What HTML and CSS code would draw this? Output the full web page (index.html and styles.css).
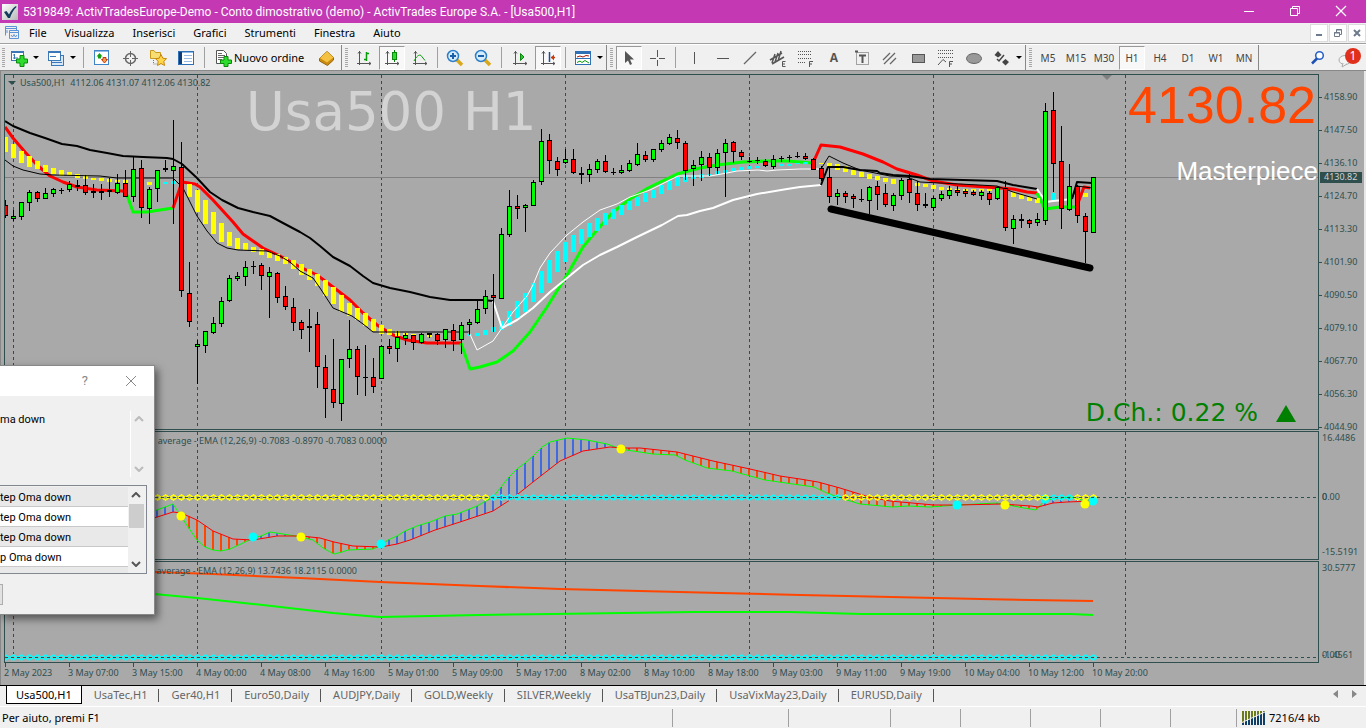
FILE: index.html
```html
<!DOCTYPE html>
<html lang="it">
<head>
<meta charset="utf-8">
<title>5319849: ActivTradesEurope-Demo - [Usa500,H1]</title>
<link rel="stylesheet" href="styles.css">
</head>
<body>
<header class="titlebar">
  <svg class="app-icon" width="16" height="16" viewBox="0 0 16 16"><defs><linearGradient id="ag" x1="0" y1="0" x2="1" y2="1"><stop offset="0" stop-color="#fff"/><stop offset="1" stop-color="#b4b8b6"/></linearGradient></defs><rect width="16" height="16" fill="url(#ag)"/><path d="M2 8 4.500 7 7 10.500C9 6.500 11 4 14 2L14.500 3C11.500 6 9.500 9.500 8 14H6Z" fill="#123a5c"/></svg>
  <h1 class="title-text">5319849: ActivTradesEurope-Demo - Conto dimostrativo (demo) - ActivTrades Europe S.A. - [Usa500,H1]</h1>
  <div class="win-buttons">
    <button class="win-btn" aria-label="Riduci a icona"><svg width="12" height="12"><path d="M1 6.500H11" stroke="#fff"/></svg></button>
    <button class="win-btn" aria-label="Ripristina"><svg width="12" height="12" fill="none" stroke="#fff"><path d="M1.500 3.500H8.500V10.500H1.500ZM3.500 3V1.500H10.500V8.500H9"/></svg></button>
    <button class="win-btn" aria-label="Chiudi"><svg width="12" height="12"><path d="M1 1 11 11M11 1 1 11" stroke="#fff" stroke-width="1.200"/></svg></button>
  </div>
</header>

<nav class="menubar">
  <svg class="menu-icon" width="16" height="16" viewBox="0 0 16 16" fill="none" stroke="#5b93d8"><path d="M1.500 10.500V1.500H12.500V5M1 3.500H12M5.500 13.500V5.500H14.500V13.500ZM5 7.500H14"/><path d="M3 8V5M7 10 8.500 12 10 9.500 11.500 12 13 10"/></svg>
  <button class="menu-item">File</button><button class="menu-item">Visualizza</button><button class="menu-item">Inserisci</button><button class="menu-item">Grafici</button><button class="menu-item">Strumenti</button><button class="menu-item">Finestra</button><button class="menu-item">Aiuto</button>
  <div class="mdi-buttons">
    <button class="mdi-btn" aria-label="Riduci grafico"><svg width="10" height="10"><path d="M2 7H8" stroke="#6d7b8c" stroke-width="2"/></svg></button>
    <button class="mdi-btn" aria-label="Ripristina grafico"><svg width="10" height="10" fill="none" stroke="#6d7b8c"><path d="M1.500 4.500H6.500V8.500H1.500ZM1 5H7M3.500 4V1.500H8.500V6.500H7M3 2H9"/></svg></button>
    <button class="mdi-btn" aria-label="Chiudi grafico"><svg width="10" height="10"><path d="M2 2 8 8M8 2 2 8" stroke="#6d7b8c" stroke-width="2"/></svg></button>
  </div>
</nav>

<div class="toolbar" role="toolbar">
  <span class="grip grip-first"></span>
  <button class="tool" aria-label="Nuovo grafico"><svg width="18" height="18"><rect x="1.500" y="2.500" width="12" height="9" fill="#fff" stroke="#3b78b5"/><path d="M1 3H14" stroke="#3b78b5" stroke-width="2"/><path d="M4.500 5V10M3 6H5M3 9H8" stroke="#3b78b5"/><path d="M10 6.500H14V10H17.500V14H14V17.500H10V14H6.500V10H10Z" fill="#2edc2e" stroke="#0a8a0a"/></svg></button><span class="caret"></span>
  <button class="tool" aria-label="Profili"><svg width="18" height="18" stroke="#3b78b5"><rect x="4.500" y="6.500" width="12" height="10" fill="#d6e8fa"/><rect x="1.500" y="2.500" width="12" height="9" fill="#fff"/><path d="M1 3H14" stroke-width="2"/><path d="M3 7.500H9M5 13.500H15"/></svg></button><span class="caret"></span>
  <span class="sep"></span>
  <button class="tool" aria-label="Market Watch"><svg width="18" height="18"><rect x="1.500" y="1.500" width="14" height="14" fill="#fff" stroke="#3f86c8"/><path d="M2 2.500H15" stroke="#8fbbe6"/><path d="M6.500 4 9.500 7.500H8V9.500H5V7.500H3.500Z" fill="#12a012"/><path d="M11.500 14 14.500 10.500H13V8.500H10V10.500H8.500Z" fill="#f0a050" stroke="#c8380a"/></svg></button>
  <button class="tool" aria-label="Finestra dati"><svg width="18" height="18" fill="none" stroke="#666"><circle cx="9.500" cy="9.500" r="5" stroke-width="1.500"/><path d="M9.500 2V8M9.500 11V17M2 9.500H8M11 9.500H17" /></svg></button>
  <button class="tool" aria-label="Navigatore"><svg width="18" height="18"><path d="M1.500 9.500V1.500H5L6.500 3.500H11.500V9.500Z" fill="#f8dc74" stroke="#c89a1c"/><path d="M4.500 11V15H8" stroke="#777" stroke-dasharray="1 1" fill="none"/><path d="M12 5.500 13.800 9.200 17.500 9.700 14.800 12.300 15.500 16.500 12 14.500 8.500 16.500 9.200 12.300 6.500 9.700 10.200 9.200Z" fill="#ffd54a" stroke="#c8860a"/></svg></button>
  <button class="tool" aria-label="Terminale"><svg width="18" height="18"><rect x="1.500" y="2.500" width="15" height="13" fill="#fff" stroke="#2f6fb5"/><path d="M2 3.500H16" stroke="#8fbbe6"/><path d="M3.500 3V15" stroke="#123c74" stroke-width="3"/><path d="M7 6.500H15M7 9.500H15M7 12.500H15" stroke="#9bbce0"/></svg></button>
  <span class="sep"></span>
  <button class="tool tool-order"><svg width="18" height="18"><path d="M2.500 1.500H9.500L12.500 4.500V14.500H2.500Z" fill="#fff" stroke="#555"/><path d="M4 4.500H8M4 6.500H11M4 8.500H11M4 10.500H8" stroke="#666"/><path d="M10 7.500H14V11H17.500V14.500H14V17.500H10V14.500H6.500V11H10Z" fill="#2edc2e" stroke="#0a8a0a"/></svg>Nuovo ordine</button>
  <button class="tool" aria-label="MetaEditor"><svg width="18" height="18"><path d="M1.500 9.500 9 2.500 15.500 8.500V11L9.500 16.500 1.500 12Z" fill="#c98a10" stroke="#9a6708"/><path d="M2 9 9 2.500 15.500 8.500 9 13.500Z" fill="#f4c141"/></svg></button>
  <span class="groupsep"><span class="grip"></span></span>
  <button class="tool" aria-label="Grafico a barre"><svg width="18" height="18" fill="none"><path d="M4.500 2V16M2 14.500H16M3 4.500 4.500 2.500 6 4.500M14 13 16 14.500 14 16" stroke="#555"/><path d="M11.500 3V12M9 10.500H11M12 4.500H14" stroke="#0a9a0a" stroke-width="1.500"/></svg></button>
  <button class="tool pressed" aria-label="Candele"><svg width="18" height="18" fill="none"><path d="M4.500 2V16M2 14.500H16M3 4.500 4.500 2.500 6 4.500M14 13 16 14.500 14 16" stroke="#555"/><path d="M11.500 1V13" stroke="#0a7a0a"/><rect x="9.500" y="3.500" width="4" height="7" fill="#2edc2e" stroke="#0a8a0a"/></svg></button>
  <button class="tool" aria-label="Grafico a linee"><svg width="18" height="18" fill="none"><path d="M4.500 2V16M2 14.500H16M3 4.500 4.500 2.500 6 4.500M14 13 16 14.500 14 16" stroke="#555"/><path d="M3 12C5 8 8 5 10 6.500L14 11.500" stroke="#0a9a0a"/></svg></button>
  <span class="sep narrow"></span>
  <button class="tool" aria-label="Zoom avanti"><svg width="18" height="18"><path d="M11 11 16 16" stroke="#d8a81c" stroke-width="3.500"/><circle cx="7" cy="7" r="5.500" fill="#d4ecfc" stroke="#2f7fc8" stroke-width="1.500"/><path d="M4 7H10M7 4V10" stroke="#1a5fa8" stroke-width="2"/></svg></button>
  <button class="tool" aria-label="Zoom indietro"><svg width="18" height="18"><path d="M11 11 16 16" stroke="#d8a81c" stroke-width="3.500"/><circle cx="7" cy="7" r="5.500" fill="#d4ecfc" stroke="#2f7fc8" stroke-width="1.500"/><path d="M4 7H10" stroke="#1a5fa8" stroke-width="2"/></svg></button>
  <span class="sep"></span>
  <button class="tool" aria-label="Scorrimento automatico"><svg width="18" height="18" fill="none"><path d="M4.500 2V16M2 14.500H16M3 4.500 4.500 2.500 6 4.500M14 13 16 14.500 14 16" stroke="#555"/><path d="M9.500 4.500 13 8 9.500 11.500Z" fill="#2ec62e" stroke="#0a8a0a"/></svg></button>
  <button class="tool pressed" aria-label="Spostamento grafico"><svg width="18" height="18" fill="none"><path d="M4.500 2V16M2 14.500H16M3 4.500 4.500 2.500 6 4.500M14 13 16 14.500 14 16" stroke="#555"/><path d="M10.500 3V13" stroke="#1a4f98" stroke-width="1.500"/><path d="M12 8.500H16" stroke="#c8380a" stroke-width="1.500"/><path d="M15 5.500 12 8.500 15 11.500Z" fill="#c8380a"/></svg></button>
  <span class="sep narrow"></span>
  <button class="tool" aria-label="Modelli"><svg width="18" height="18" fill="none"><rect x="1.500" y="2.500" width="15" height="13" fill="#fff" stroke="#2f6fb5"/><path d="M1 3.500H17" stroke="#2f6fb5" stroke-width="3"/><path d="M2 9.500H16" stroke="#2f6fb5"/><path d="M3 8 6 7 9 8 12 6.500 15 7" stroke="#a01c0a"/><path d="M3 13.500 6 12 8 13.500 11 11.500 15 14" stroke="#0a9a0a"/></svg></button><span class="caret"></span>
  <span class="groupsep"><span class="grip"></span></span>
  <button class="tool pressed" aria-label="Cursore"><svg width="18" height="18"><path d="M5 2V14L8 11.500 10 16 12 15 10 10.500H14Z" fill="#555"/></svg></button>
  <button class="tool" aria-label="Mirino"><svg width="18" height="18"><path d="M9.500 1V8M9.500 11V17M2 9.500H8M11 9.500H17" stroke="#555"/></svg></button>
  <span class="sep"></span>
  <button class="tool" aria-label="Linea verticale"><svg width="18" height="18"><path d="M9.500 3V15" stroke="#555"/></svg></button>
  <button class="tool" aria-label="Linea orizzontale"><svg width="18" height="18"><path d="M4 9.500H16" stroke="#555"/></svg></button>
  <button class="tool" aria-label="Trendline"><svg width="18" height="18"><path d="M3 15 15 3" stroke="#666" stroke-width="1.200"/></svg></button>
  <button class="tool" aria-label="Canale equidistante"><svg width="18" height="18" stroke="#555"><path d="M1 11 13 4M3 15 15 8M3 14 6 5M6 13 9 4M9 12 12 2" stroke-width="1.500"/><path d="M16.500 12.500H13.500V17.500H16.500M13 15H16" fill="none"/></svg></button>
  <button class="tool" aria-label="Fibonacci"><svg width="18" height="18" stroke="#555" fill="none"><path d="M1 2.500H15M1 5.500H15M1 9.500H15M1 13.500H9" stroke-dasharray="1 1"/><path d="M12.500 18V12.500H16M12 15H15"/></svg></button>
  <button class="tool letter" aria-label="Testo">A</button>
  <button class="tool" aria-label="Etichetta"><svg width="18" height="18" stroke="#555"><rect x="3.500" y="3.500" width="12" height="12" fill="none" stroke-dasharray="1 1"/><path d="M2 2.500H5M6 6.500H13M9.500 6V14" stroke-width="2"/></svg></button>
  <button class="tool" aria-label="Andrews"><svg width="18" height="18" stroke="#666" stroke-width="1.300"><path d="M2 11 9 4M3 15 14 4M9 15 15 9"/></svg></button>
  <button class="tool" aria-label="Rettangolo"><svg width="18" height="18"><rect x="3.500" y="5.500" width="12" height="8" fill="#999" stroke="#555"/></svg></button>
  <button class="tool" aria-label="Espansione"><svg width="18" height="18" stroke="#555" fill="none"><path d="M1 1.500H16M1 4.500H16M1 8.500H16" stroke-dasharray="1 1"/><path d="M1 16 6 10.500 9 13M12.500 18V12.500H16M12 15H15"/></svg></button>
  <button class="tool" aria-label="Ellisse"><svg width="18" height="18"><ellipse cx="9" cy="9.500" rx="7.500" ry="5" fill="#999" stroke="#666"/></svg></button>
  <button class="tool" aria-label="Frecce"><svg width="18" height="18"><path d="M5 2 8.500 6 5 8.500 1.500 6ZM12.500 10 16 13 12.500 16.500 9 13Z" fill="#444"/><path d="M4 10 6 12 11 6" stroke="#444" stroke-width="1.500" fill="none"/></svg></button><span class="caret"></span>
  <span class="groupsep"><span class="grip"></span></span>
  <button class="tool tf">M5</button><button class="tool tf">M15</button><button class="tool tf">M30</button><button class="tool tf pressed">H1</button><button class="tool tf">H4</button><button class="tool tf">D1</button><button class="tool tf">W1</button><button class="tool tf">MN</button>
  <span class="endsep"></span>
  <button class="tool search" aria-label="Cerca"><svg width="16" height="16"><circle cx="9.500" cy="5.500" r="3.800" fill="#fff" stroke="#2a63c8" stroke-width="1.600"/><path d="M7 8.500 2 13.500" stroke="#1c50b4" stroke-width="2.500"/></svg></button>
  <button class="tool bubble" aria-label="Messaggi"><svg width="26" height="24"><ellipse cx="9" cy="14" rx="6" ry="4.500" fill="#f4f4f4" stroke="#aaa"/><path d="M7 17 6 21 11 18" fill="#f4f4f4" stroke="#aaa"/><circle cx="17" cy="10" r="8" fill="#e0301c"/></svg><span class="badge">1</span></button>
</div>

<main class="chart">
  <section class="pane pane-price">
    <svg id="price" class="plot"></svg>
    <div class="quote">4130.82</div>
    <div class="strategy">Masterpiece</div>
    <div class="daychange">D.Ch.: 0.22 %<svg width="20" height="17"><path d="M10 0 20 17H0Z" fill="#008000"/></svg></div>
  </section>
  <aside class="scale scale-price">
    <span class="tick">4158.90</span><span class="tick">4147.50</span><span class="tick">4136.10</span><span class="tick">4124.70</span><span class="tick">4113.30</span><span class="tick">4101.90</span><span class="tick">4090.50</span><span class="tick">4079.10</span><span class="tick">4067.70</span><span class="tick">4056.30</span><span class="tick">4044.90</span>
    <span class="current">4130.82</span>
  </aside>
  <section class="pane"><svg id="macd" class="plot"></svg></section>
  <aside class="scale scale-ind"><span>16.4486</span><span class="zero">0.00<span class="over">0</span></span><span>-15.5191</span></aside>
  <section class="pane"><svg id="trend" class="plot"></svg></section>
  <aside class="scale scale-ind"><span>30.5777</span><span>-1.4561<span class="over">0.00</span></span></aside>
  <div class="times" id="times"></div>

  <div class="dialog" role="dialog" aria-label="Avviso">
    <div class="dialog-title"><button class="dlg-btn">?</button><button class="dlg-btn" aria-label="Chiudi avviso"><svg width="12" height="12"><path d="M1 1 11 11M11 1 1 11" stroke="#888"/></svg></button></div>
    <div class="message"><p>ma down</p><div class="scroll light"><svg width="10" height="6"><path d="M1 5 5 1 9 5" fill="none" stroke="#bbb" stroke-width="2"/></svg><svg width="10" height="6"><path d="M1 1 5 5 9 1" fill="none" stroke="#bbb" stroke-width="2"/></svg></div></div>
    <div class="list">
      <ul><li>tep Oma down</li><li>tep Oma down</li><li>tep Oma down</li><li>p Oma down</li><li></li></ul>
      <div class="scroll"><svg width="10" height="6"><path d="M1 5 5 1 9 5" fill="none" stroke="#555" stroke-width="2"/></svg><span class="thumb"></span><svg width="10" height="6"><path d="M1 1 5 5 9 1" fill="none" stroke="#555" stroke-width="2"/></svg></div>
    </div>
    <button class="dlg-action" aria-label="OK"></button>
  </div>
</main>

<nav class="tabs">
  <button class="tab active">Usa500,H1</button><button class="tab">UsaTec,H1</button><button class="tab">Ger40,H1</button><button class="tab">Euro50,Daily</button><button class="tab">AUDJPY,Daily</button><button class="tab">GOLD,Weekly</button><button class="tab">SILVER,Weekly</button><button class="tab">UsaTBJun23,Daily</button><button class="tab">UsaVixMay23,Daily</button><button class="tab">EURUSD,Daily</button>
  <div class="tab-arrows"><svg width="5" height="8"><path d="M5 0V8L0 4Z" fill="#888"/></svg><svg width="5" height="8"><path d="M0 0V8L5 4Z" fill="#888"/></svg></div>
</nav>

<footer class="status">
  <span class="hint">Per aiuto, premi F1</span>
  <span class="cell w116"></span><span class="cell w102"></span><span class="cell w70"></span><span class="cell w70"></span><span class="cell w70"></span><span class="cell w70"></span><span class="cell w66"></span>
  <span class="cell traffic"><svg width="24" height="14"><path d="M1 0V14M4 0V14M7 0V14M10 0V14M13 0V14M16 0V14M19 0V14M22 0V14" stroke="#6b7a1c" stroke-width="2"/><path d="M1 12V14M4 10V14M7 9V14M10 7V14M13 6V14M16 4V14M19 3V14M22 1V14" stroke="#0f3f66" stroke-width="2"/><path d="M0 11.500 24 .5" stroke="#efefef"/></svg>7216/4 kb</span>
</footer>
<script src="chart.js"></script>
</body>
</html>
```
FILE: styles.css
```css
* { box-sizing: border-box; }
html, body { height: 100%; }
body { margin: 0; display: flex; flex-direction: column; overflow: hidden; background: #f0f0f0; color: #000; font: 11px/16px "Noto Sans", "Open Sans", sans-serif; }
button { font: inherit; color: inherit; background: none; border: 0; padding: 0; margin: 0; }
svg { display: block; flex: none; }

.titlebar { flex: none; height: 23px; background: #c438b4; color: #fff; display: flex; align-items: center; padding-left: 2px; }
.title-text { margin: 0 auto 0 5px; font: 12px/16px Roboto, sans-serif; white-space: nowrap; }
.win-buttons { display: flex; height: 100%; padding-right: 2px; }
.win-btn { width: 46px; display: flex; justify-content: center; align-items: center; padding-bottom: 2px; }

.menubar { flex: none; height: 21px; border-bottom: 1px solid #a0a0a0; display: flex; align-items: center; padding-left: 4px; }
.menu-item { padding: 0 9px; }
.mdi-buttons { margin-left: auto; display: flex; gap: 1px; }
.mdi-btn { width: 18px; height: 18px; background: #fff; border: 1px solid #dcdcdc; display: flex; align-items: center; justify-content: center; }

.toolbar { flex: none; height: 27px; display: flex; align-items: center; border-top: 1px solid #fff; border-bottom: 1px solid #888; }
.grip { width: 3px; height: 20px; background: repeating-linear-gradient(#a8a8a8 0 1px, #f0f0f0 1px 2px); }
.grip-first { margin: 0 0 0 2px; }
.tool { width: 28px; height: 24px; flex: none; display: flex; align-items: center; justify-content: center; }
.tool-order { width: 104px; gap: 2px; justify-content: flex-start; padding-left: 5px; }
.pressed { background: #f8f8f8; border: 1px solid #fff; border-top-color: #999; border-left-color: #999; margin: 0 1px; width: 26px; }
.caret { width: 9px; flex: none; }
.caret::before { content: ""; display: block; width: 0; border: 3px solid transparent; border-top-color: #000; border-bottom: 0; }
.sep { width: 9px; height: 21px; flex: none; background: linear-gradient(#a0a0a0, #a0a0a0) center / 1px 100% no-repeat; }
.sep.narrow { width: 7px; }
.groupsep { width: 9px; height: 25px; flex: none; border-left: 1px solid #888; display: flex; align-items: center; justify-content: center; }
.endsep { height: 25px; border-left: 1px solid #888; margin-right: auto; }
.letter { color: #555; font: bold 12px/16px "Open Sans", sans-serif; }
.tf { color: #444; font-size: 10px; }
.bubble { position: relative; width: 34px; }
.badge { position: absolute; left: 17px; top: 2px; width: 8px; color: #fff; text-align: center; font-size: 12px; }

.chart { flex: 1; min-height: 0; position: relative; background: #a9a9a9; border-left: 1px solid #888; border-right: 2px solid #e8e8e8; padding: 3px 0 0 3px; display: grid; grid-template-columns: minmax(0, 1fr) 45px; grid-template-rows: minmax(0, 356fr) minmax(0, 129fr) minmax(0, 102fr) 21px; row-gap: 1px; color: #2f4f4f; font-size: 9px; line-height: 12px; }
.pane { position: relative; border: 1px solid #2f4f4f; min-width: 0; overflow: hidden; }
.plot { position: absolute; left: 0; top: 0; width: 100%; height: 100%; }
.plot text { fill: #2f4f4f; font-size: 9px; }
.plot .watermark { fill: #d3d3d3; font: 53px "DejaVu Sans", sans-serif; }
.quote { position: absolute; right: 2px; top: 0; font: 52px/60px "Liberation Sans", Arial, sans-serif; color: #ff4500; }
.strategy { position: absolute; right: 0; top: 78px; font: 26px/36px "Liberation Sans", Arial, sans-serif; color: #fff; }
.daychange { position: absolute; right: 22px; bottom: 0; display: flex; align-items: center; gap: 18px; font: 25px/32px "DejaVu Sans", sans-serif; color: #008000; }

.scale { position: relative; display: flex; flex-direction: column; justify-content: space-between; line-height: 10px; }
.scale-price { padding-top: 18px; margin-bottom: -2px; }
.tick { display: flex; align-items: center; }
.tick::before { content: ""; width: 3px; height: 1px; margin-right: 2px; background: #2f4f4f; }
.current { position: absolute; left: 1px; top: 98px; width: 42px; height: 11px; padding-left: 4px; background: #2f4f4f; color: #d3d3d3; }
.scale-ind { padding: 2px 0 3px 3px; }
.scale-ind > span { position: relative; }
.scale-ind > .zero { margin-top: 4px; }
.over { position: absolute; left: 0; bottom: 0; }
.times { grid-column: 1 / -1; display: flex; }
.time { flex: none; width: 64px; white-space: nowrap; position: relative; padding-top: 3px; }
.time::before { content: ""; position: absolute; left: 1px; top: -1px; height: 4px; border-left: 1px solid #2f4f4f; }

.dialog { position: absolute; left: -1px; top: 294px; width: 155px; height: 250px; background: #f0f0f0; color: #000; border: 1px solid #888; border-left: 0; box-shadow: 3px 4px 8px rgba(0, 0, 0, .5); font: 11px/16px Roboto, sans-serif; }
.dialog-title { height: 30px; background: #fff; display: flex; justify-content: flex-end; gap: 37px; padding-right: 17px; color: #888; font-size: 13px; }
.message { margin: 15px 8px 0 0; height: 66px; display: flex; justify-content: space-between; }
.message p { margin: 0; padding-top: 1px; }
.scroll { width: 16px; display: flex; flex-direction: column; align-items: center; justify-content: space-between; padding: 5px 0; }
.light { border-left: 1px solid #fff; }
.list { margin: 8px 7px 0 0; height: 89px; border: 1px solid #828790; border-left: 0; background: #f0f0f0; display: flex; overflow: hidden; padding: 1px 2px 1px 0; }
.list ul { flex: 1; margin: 0; padding: 0; list-style: none; background: #fff; }
.list li { height: 20px; padding-top: 3px; border-bottom: 1px solid #c8c8c8; }
.list li:nth-child(odd) { background: #e9e9e9; }
.thumb { width: 15px; height: 24px; background: #cdcdcd; margin: -28px 0 0; }
.dlg-action { width: 3px; height: 21px; margin-top: 10px; background: #e1e1e1; border: 1px solid #adadad; border-left: 0; display: block; }

.tabs { flex: none; height: 22px; display: flex; border-top: 1px solid #000; padding-left: 6px; color: #666; border-bottom: 1px solid #fff; }
.tab { height: 18px; padding: 0 12px; position: relative; white-space: nowrap; }
.tab::after { content: ""; position: absolute; right: 0; top: 3px; height: 13px; border-right: 1px solid #555; }
.tab.active { background: #fff; color: #000; border: 1px solid #000; border-top: 0; padding: 0 9px; }
.tab.active::after { display: none; }
.tab-arrows { margin-left: auto; display: flex; gap: 14px; padding: 4px 9px 0 0; }

.status { flex: none; height: 21px; display: flex; align-items: center; }
.hint { margin: 0 auto 0 2px; }
.cell { height: 18px; border-left: 1px solid #a0a0a0; }
.w116 { width: 116px; } .w102 { width: 102px; } .w70 { width: 70px; } .w66 { width: 66px; }
.traffic { width: 130px; padding-left: 5px; display: flex; align-items: center; gap: 3px; }
```
FILE: chart.js
```js
const STEP = 8, X0 = 5;
const COLORS = { r: '#ff0000', g: '#00ff00', k: '#000000', y: '#ffff00', c: '#00ffff', w: '#ffffff' };

// high, body top, body bottom, low, colour
const candles = `200,205,216,218,r 210,216,219,221,g 202,202,217,220,g 190,192,203,211,g 191,192,199,202,r 188,193,199,199,g 188,189,194,197,g 188,190,191,194,k
181,184,190,192,g 180,185,187,191,k 175,185,193,195,r 184,191,193,198,k 184,191,193,200,k 178,190,192,197,k 174,183,193,194,g 170,183,197,197,r
157,169,197,202,g 160,168,208,218,r 187,189,209,224,g 170,170,189,202,g 160,168,170,172,k 120,166,171,224,g 142,167,291,297,r 262,293,322,327,r
340,344,347,384,g 331,331,346,353,g 317,323,333,334,g 297,301,324,327,g 275,278,301,302,g 272,276,279,281,g 261,267,277,286,g 261,266,267,274,k
263,265,276,290,r 267,272,277,318,g 272,273,298,303,r 286,296,307,310,r 298,307,323,331,r 320,322,330,339,r 309,326,328,352,k 312,324,367,388,r
355,367,389,418,r 339,389,403,408,r 359,359,404,421,g 320,349,359,368,g 346,349,377,395,r 345,377,378,396,k 358,377,387,393,r 345,346,379,379,g
339,346,349,354,r 331,337,349,362,g 333,335,339,345,g 335,335,343,350,r 333,334,343,344,g 333,333,335,338,k 333,334,341,345,r 329,329,340,348,g
324,330,341,351,r 322,325,340,354,g 319,322,325,335,g 301,309,323,324,g 290,296,309,314,g 274,295,298,332,r 228,234,299,299,g 190,206,235,237,g
195,206,209,219,r 204,205,208,232,g 180,182,206,206,g 129,141,182,185,g 134,140,161,174,r 157,161,170,176,r 149,159,163,164,g 149,159,173,174,r
167,173,175,184,k 164,169,175,182,g 159,161,170,173,g 155,161,172,173,r 168,172,173,175,k 165,170,173,174,g 160,163,171,172,g 143,154,165,166,g
151,155,160,162,r 149,149,160,162,g 140,143,150,152,g 134,137,144,145,g 130,138,143,149,r 141,143,171,180,r 160,165,169,186,g 151,157,165,181,g
153,157,168,176,r 149,153,168,174,g 139,143,153,197,g 141,142,152,163,r 150,152,157,160,r 157,161,162,163,k 157,160,161,164,k 159,161,166,167,r
155,159,167,169,g 156,158,159,162,k 155,157,158,162,k 152,156,157,158,k 153,156,159,160,r 158,159,170,170,r 166,168,179,181,r 166,177,197,203,r
189,193,197,205,g 191,193,197,203,r 194,196,199,208,r 189,199,200,202,k 186,187,201,214,g 181,186,195,210,r 184,193,205,207,r 193,195,206,211,g
178,180,196,200,g 174,179,193,203,r 181,193,205,211,r 193,204,206,208,k 196,198,208,211,g 191,194,199,201,g 186,190,196,199,g 186,190,193,196,r
189,191,194,197,r 190,192,195,196,r 190,192,196,200,g 191,193,200,205,r 186,187,199,200,g 181,188,228,231,r 215,219,229,244,g 214,219,221,228,k
219,220,224,228,r 213,219,223,226,g 103,111,221,225,g 92,110,164,192,r 126,161,209,229,r 164,186,210,211,g 185,186,216,223,r 213,216,232,263,r
177,177,233,233,g`.split(/\s+/).map(s => s.split(','));

// colour, first x, then top-bottom for each consecutive bar
const ribbons = `y 5 137-152 144-158 151-163 156-167 161-169 165-172 168-174 170-176 172-176 174-178 175-179 178-180 178-181 179-182 180-182 180-183
y 149 182-185
c 165 182-184 181-184
y 189 184-197 190-212 200-224 212-234 223-242 232-246 238-249 243-250 247-252 249-255 252-258 254-261 257-264 260-269 264-275 269-280 274-286 280-296 287-304 295-312 303-316 308-320 313-326 319-331 325-334 329-335 331-336 333-336 334-335
y 429 333-337
c 469 334-336 333-336 330-335 327-332 321-330 311-326 301-318 293-312 283-302 271-293 260-283 251-272 242-262 235-252 229-244 223-237 218-231 213-225 209-219 205-215 201-210 197-206 193-202 190-198 185-194 181-190 177-186 175-182 175-179 174-178 174-176 171-175 170-173 168-171 167-170 166-169 166-168 165-166 164-166 164-166 164-166 163-164 162-164
y 821 163-164 163-166 164-170 166-172 170-175 172-177 174-179 176-180 178-182 179-184 181-183 181-184 183-186 184-187 185-189 187-190 188-190 189-191 189-191 189-191 189-191 189-191
y 1013 192-197 195-199 197-201 198-203
c 1053 193-200
y 1085 193-197`.split('\n');

const thick = [
  ['r', '5,127 13,138 25,152 37,165 50,176 63,182 77,187 97,190 123,191 127,195'],
  ['g', '127,195 133,212 147,212 173,208'],
  ['r', '173,208 182,182 195,184 200,187 213,200 233,222 243,234 263,248 280,256 300,267 317,275 333,287 350,300 363,313 377,325 393,335 407,340 427,343 461,343'],
  ['g', '461,343 470,369 480,367 497,362 513,351 530,332 547,307 567,275 583,247 597,230 613,212 630,199 648,188 677,174 700,168 717,165 743,162 767,161 787,161 813,163'],
  ['r', '813,163 821,145 840,147 863,154 883,162 897,169 917,175 933,181 957,185 1000,188 1013,189 1027,192 1037,193'],
  ['g', '1037,193 1045,209 1060,207 1075,207'],
  ['r', '1078,203 1084,187 1090,188']
];
const medium = [
  ['k', '5,121 13,126 30,133 45,138 62,144 77,146 90,150 107,153 123,156 143,157 167,158 173,159 182,164 197,178 210,192 222,200 238,208 253,212 270,216 283,223 300,232 310,238 320,246 333,257 350,266 363,276 373,283 390,288 410,292 430,297 450,300 483,300 493,301'],
  ['w', '493,301 502,328 517,320 533,308 550,292 567,278 583,265 600,255 617,247 637,237 662,225 678,216 687,215 700,211 713,208 733,200 757,194 787,189 800,187 821,185'],
  ['k', '821,185 828,167 843,167 860,170 877,171 880,173 893,175 910,176 930,179 963,180 997,181 1013,185 1037,189'],
  ['w', '1037,189 1046,202 1053,201 1063,200 1072,199'],
  ['k', '1072,199 1077,182 1092,183']
];
const thin = [
  ['k', '5,160 13,166 23,170 40,174 53,175 100,176 117,178 173,178 183,188 197,216 207,231 217,243 227,248 238,250 267,251 280,256 290,262 300,271 313,278 320,288 333,308 352,316 363,324 373,332 469,332'],
  ['w', '469,332 477,350 493,341 502,328 513,312 527,296 533,285 540,268 550,253 567,235 583,222 600,210 617,204 630,197 650,190 678,176 710,176 727,173 737,171 758,170 767,171 777,170 800,169 821,169'],
  ['k', '821,169 829,156 843,163 860,170 880,174 890,176 907,177 920,182 940,183 960,184 997,186 1013,192 1037,199'],
  ['k', '1072,199 1077,186 1092,188']
];

const fast = '154,511 165,507 173,504 181,516 188,527 197,540 205,547 213,550 221,551 230,549 243,543 253,538 261,536 270,532 283,534 301,537 313,540 323,548 334,554 342,552 348,550 373,549 381,545 388,540 397,536 405,531 417,526 430,522 445,516 457,514 477,506 493,497 509,477 517,469 525,463 533,456 542,447 550,442 567,438 587,440 607,444 621,449 633,451 653,454 675,455 685,460 707,468 732,471 750,476 765,480 800,485 814,487 827,493 840,498 860,504 892,507 908,506 930,507 957,505 997,503 1024,508 1036,510 1045,500 1071,497 1085,501 1093,499';
const slow = '154,518 173,512 181,513 197,520 213,531 233,539 253,540 277,536 301,536 320,538 334,542 353,546 381,547 397,544 410,540 435,530 460,522 493,511 513,498 533,482 560,461 583,451 610,447 621,448 640,448 677,452 713,461 750,469 780,476 800,479 818,482 840,488 869,497 890,501 934,505 957,505 1002,504 1031,506 1038,507 1053,503 1067,502 1093,501';

const rect = (x, y, w, h, f) => `<rect x="${x}" y="${y}" width="${w}" height="${h}" fill="${f}"/>`;
const line = (pts, color, w) => `<polyline points="${pts}" fill="none" stroke="${color}" stroke-width="${w}" stroke-linejoin="round"/>`;
const grid = (top, h) => [13, 197, 381, 565, 749, 933, 1125].map(x =>
  `<path d="M${x + .5} ${top}V${top + h}" stroke="#2f4f4f" stroke-dasharray="3 3"/>`).join('');
const zeroLine = (x, y) => `<path d="M${x} ${y + .5}H3000" stroke="#2f4f4f" stroke-dasharray="3 3"/>`;
const star = (x, y, c) => `<circle cx="${x + .5}" cy="${y + .5}" r="2.200" fill="none" stroke="${COLORS[c]}" stroke-width="1.500"/>` +
  [[0, -3], [0, 3], [-3, -1], [-3, 1], [3, -1], [3, 1]].map(([a, b]) => rect(x + a, y + b, 1, 1, COLORS[c])).join('');
const dot = (x, y, c) => `<circle cx="${x}" cy="${y}" r="4.500" fill="${COLORS[c]}"/>`;
const series = (list, w) => list.map(([c, p]) => line(p, COLORS[c], w)).join('');

function at(points, x) {
  const p = points.split(' ').map(s => s.split(',').map(Number));
  for (let i = 1; i < p.length; i++) {
    if (x <= p[i][0]) return p[i - 1][1] + (p[i][1] - p[i - 1][1]) * (x - p[i - 1][0]) / (p[i][0] - p[i - 1][0]);
  }
  return p[p.length - 1][1];
}

function drawPrice() {
  let out = grid(75, 900) + rect(5, 177, 3000, 1, '#808080');
  out += '<text class="watermark" x="246" y="130">Usa500 H1</text>';
  out += '<path d="M8 81H16L12 85Z" fill="#2f4f4f"/><path d="M1102 75H1112L1107 80Z" fill="#808080"/><text x="20" y="86" xml:space="preserve">Usa500,H1  4112.06 4131.07 4112.06 4130.82</text>';
  out += series(thick, 3);
  ribbons.forEach(row => {
    const [c, x, ...bars] = row.split(' ');
    bars.forEach((b, i) => {
      const [t, e] = b.split('-').map(Number);
      out += rect(+x + i * STEP - 2, t, 5, e - t, COLORS[c]);
    });
  });
  out += series(thin, 1) + series(medium, 2);
  candles.forEach(([h, t, b, l, c], i) => {
    const x = X0 + i * STEP;
    out += rect(x, h, 1, l - h, '#000') + rect(x - 2, t, 5, b - t, '#000');
    if (c !== 'k') out += rect(x - 1, +t + 1, 3, Math.max(1, b - t - 2), COLORS[c]);
  });
  out += '<path d="M831 209 1090 268" stroke="#000" stroke-width="7" stroke-linecap="round"/>';
  document.getElementById('price').innerHTML = `<g transform="translate(-5 -75)">${out}</g>`;
}

function drawMacd() {
  let out = grid(432, 900) + zeroLine(5, 497);
  out += '<text x="387" y="444" text-anchor="end">average - EMA (12,26,9) -0.7083 -0.8970 -0.7083 0.0000</text>';
  for (let x = 157; x <= 1093; x += STEP) {
    const a = at(fast, x), b = at(slow, x);
    out += rect(x - 1, Math.min(a, b), 2, Math.abs(a - b), a < b ? '#4169e1' : '#ff4500');
  }
  out += line(fast, '#00ff00', 1) + line(slow, '#ff0000', 1);
  out += dot(1045, 499, 'c');
  for (let x = 157; x <= 1093; x += STEP) {
    const cyan = (x >= 493 && x < 845) || (x >= 1053 && x <= 1069);
    out += star(x, 497, cyan ? 'c' : 'y');
  }
  out += dot(181, 516, 'y') + dot(253, 537, 'c') + dot(301, 537, 'y') + dot(381, 544, 'c') + dot(621, 449, 'y') +
    dot(957, 505, 'c') + dot(1005, 505, 'y') + dot(1093, 501, 'c') + dot(1085, 504, 'y');
  out += zeroLine(5, 497);
  document.getElementById('macd').innerHTML = `<g transform="translate(-5 -432)">${out}</g>`;
}

function drawTrend() {
  let out = grid(562, 95) + zeroLine(5, 657);
  out += line('154,572 213,574 300,578 380,582 480,586 560,589 640,591 720,593 800,595 847,596 980,599 1031,600 1093,601', '#ff4500', 2);
  out += line('154,594 197,598 253,604 333,613 367,616 380,617 480,615 553,614 693,612 790,612 861,614 1071,614 1093,615', '#00ff00', 2);
  out += '<text x="357" y="574" text-anchor="end">average - EMA (12,26,9) 13.7436 18.2115 0.0000</text>';
  for (let x = X0; x <= 1093; x += STEP) out += star(x, 657, 'c');
  out += zeroLine(5, 657);
  document.getElementById('trend').innerHTML = `<g transform="translate(-5 -562)">${out}</g>`;
}

drawPrice();
drawMacd();
drawTrend();
document.getElementById('times').innerHTML = ['2 May 2023', '3 May 07:00', '3 May 15:00', '4 May 00:00', '4 May 08:00', '4 May 16:00', '5 May 01:00', '5 May 09:00', '5 May 17:00', '8 May 02:00', '8 May 10:00', '8 May 18:00', '9 May 03:00', '9 May 11:00', '9 May 19:00', '10 May 04:00', '10 May 12:00', '10 May 20:00']
  .map(t => `<span class="time">${t}</span>`).join('');
```
